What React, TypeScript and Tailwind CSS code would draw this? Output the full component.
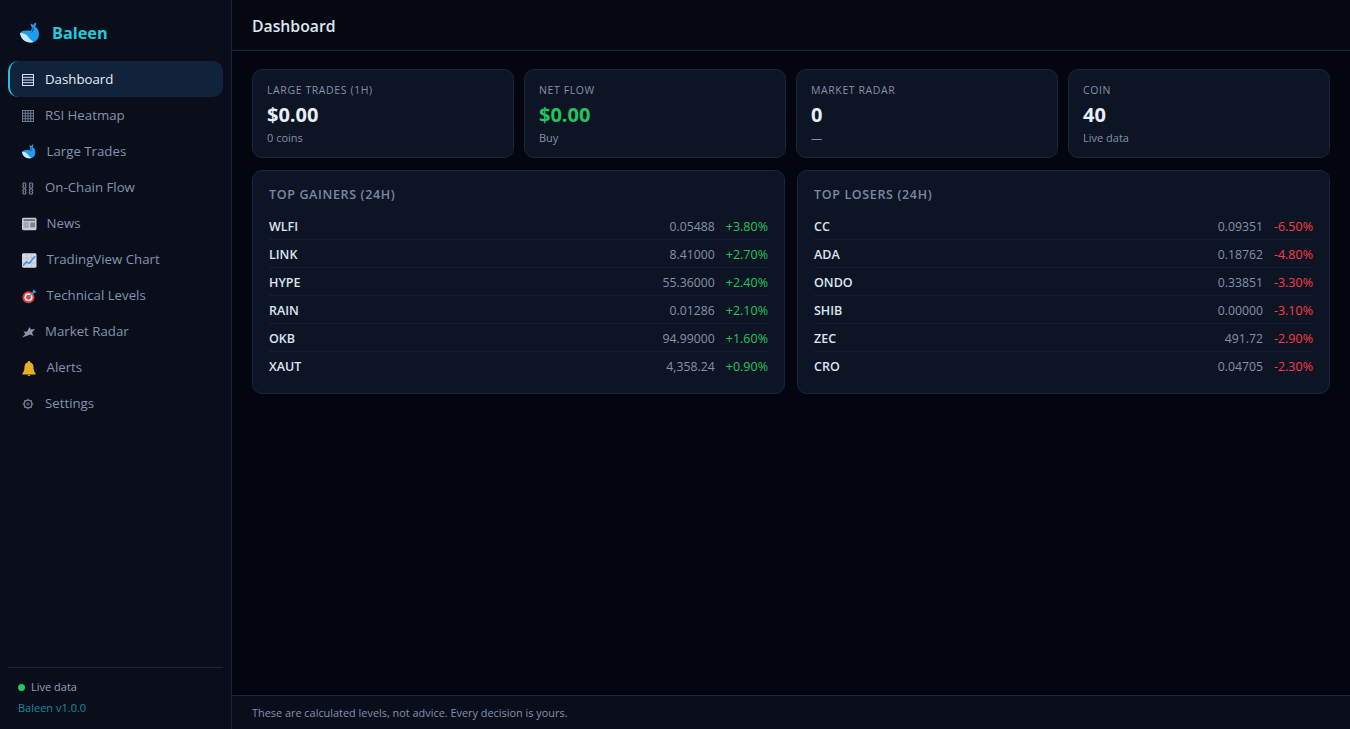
import React from "react";

const Whale = ({ s = 20 }: { s?: number }) => (
  <svg width={s} height={s * 1.1} viewBox="0 0 20 22">
    <path d="M0 11C2 8.500 7 8 10.500 9c1-1 1.500-2.500 1.300-4-.8-1-1.300-2-.8-3.500 1 .5 1.800 1 2.200 1.700.6-1.200 1.600-2.400 2.800-2.700.5 1.500 0 3-1 4.300 2.500 1.200 4 3.700 4 7.200 0 5-3.500 8.500-8.500 8.500C4.500 20.500.5 16 0 11z" fill="#1f9cf0" />
    <path d="M0 11c3.500 0 6 1 7.500 3s3 4 6 6c-1 .4-2 .5-3 .5C4.500 20.500.5 16 0 11z" fill="#c4e9fc" />
    <path d="M13 5.500c.5 1.800 0 3.500-1.200 4.800" fill="none" stroke="#0a3a60" strokeWidth="1" />
  </svg>
);

const LinesIcon = ({ grid = false, color }: { grid?: boolean; color: string }) => (
  <svg width="12" height="12" viewBox="0 0 12 12" fill="none" stroke={color} strokeWidth="1">
    <rect x="0.500" y="0.500" width="11" height="11" />
    <path d="M0 3.300h12M0 6h12M0 8.700h12" />
    {grid && <path d="M3.300 0v12M6 0v12M8.700 0v12" />}
  </svg>
);

const ChainIcon = () => (
  <svg width="12" height="13" viewBox="0 0 12 13" fill="none" stroke="#7b869d" strokeWidth="1.100">
    <path d="M1.500 1h1.800l.7 1-.7 1.500.7 1.500-.7 1H1.500l-.7-1 .7-1.500L.8 2zM8 1h2l.8 1-.8 1.500.8 1.500-.8 1H8l-.7-1L8 3.500 7.300 2z" />
    <path d="M1.500 7h1.800l.7 1-.7 1.500.7 1.500-.7 1H1.500l-.7-1 .7-1.500L.8 8zM8 7h2l.8 1-.8 1.500.8 1.500-.8 1H8l-.7-1L8 9.500 7.300 8z" />
  </svg>
);

const NewsIcon = () => (
  <svg width="15" height="14" viewBox="0 0 15 14">
    <rect x="0" y="0.500" width="15" height="13" rx="1.500" fill="#c9ccd4" />
    <rect x="1.500" y="2" width="12" height="2" fill="#6d7280" />
    <rect x="1.500" y="5.500" width="5.500" height="1" fill="#7d828e" />
    <rect x="1.500" y="7.500" width="5.500" height="1" fill="#7d828e" />
    <rect x="1.500" y="9.500" width="5.500" height="1" fill="#7d828e" />
    <rect x="8.500" y="5.500" width="5" height="5" fill="#7d828e" />
  </svg>
);

const ChartIcon = () => (
  <svg width="15" height="15" viewBox="0 0 15 15">
    <rect width="15" height="15" rx="1.500" fill="#d7d9e2" />
    <path d="M0 5h15M0 10h15M5 0v15M10 0v15" stroke="#b4b7c8" strokeWidth="0.600" />
    <path d="M1 13l3.500-4 3 1.500L13.500 3" fill="none" stroke="#3d8fe0" strokeWidth="1.500" />
  </svg>
);

const TargetIcon = () => (
  <svg width="15" height="15" viewBox="0 0 15 15">
    <circle cx="6.700" cy="8.300" r="6.200" fill="#e23c3c" />
    <circle cx="6.700" cy="8.300" r="4.200" fill="#f2e9e6" />
    <circle cx="6.700" cy="8.300" r="2.500" fill="#e23c3c" />
    <path d="M7 8l6-6" stroke="#3a9be8" strokeWidth="1.500" />
    <path d="M11 1.500l1.500-1.500.6 1.900 1.900.6-1.500 1.500-2-.5z" fill="#3a9be8" />
  </svg>
);

const SatIcon = () => (
  <svg width="13" height="12" viewBox="0 0 13 12">
    <path d="M0 11.500l3.300-3.500L1.500 5.500l3.500.3L7.500 1 9 3.500 13 3 10 6.500l1.500 3.500-3.500-1.500L4.500 10z" fill="#8a95a9" />
  </svg>
);

const Bell = () => (
  <svg width="14" height="15" viewBox="0 0 14 15">
    <path d="M7 0c.8 0 1.200.5 1.200 1.200C10.300 1.800 11.500 3.600 11.500 6c0 3 .7 5 2.200 6.500v.9H.3v-.9C1.800 11 2.500 9 2.500 6c0-2.400 1.200-4.200 3.300-4.800C5.800.5 6.200 0 7 0z" fill="#e8ae25" />
    <path d="M5.500 13.800h3C8.300 14.600 7.700 15 7 15s-1.300-.4-1.500-1.200z" fill="#e8ae25" />
  </svg>
);

const Gear = () => (
  <svg width="12" height="12" viewBox="0 0 12 12" fill="none" stroke="#7b869d">
    <circle cx="6" cy="6" r="3.900" strokeWidth="1.400" />
    <circle cx="6" cy="6" r="1.200" strokeWidth="0.800" />
    <path d="M6 .6v1M6 10.400v1M.6 6h1M10.400 6h1M2.200 2.200l.7.7M9.100 9.100l.7.7M2.200 9.800l.7-.7M9.100 2.900l.7-.7" strokeWidth="1" />
  </svg>
);

const nav = [
  { label: "Dashboard", icon: <LinesIcon color="#dce3ee" />, w: "w-[13px]", active: true },
  { label: "RSI Heatmap", icon: <LinesIcon grid color="#6f7a90" />, w: "w-[13px]" },
  { label: "Large Trades", icon: <Whale s={14} />, w: "w-[14.500px]" },
  { label: "On-Chain Flow", icon: <ChainIcon />, w: "w-[13px]" },
  { label: "News", icon: <NewsIcon />, w: "w-[14.500px]" },
  { label: "TradingView Chart", icon: <ChartIcon />, w: "w-[14.500px]" },
  { label: "Technical Levels", icon: <TargetIcon />, w: "w-[14.500px]" },
  { label: "Market Radar", icon: <SatIcon />, w: "w-[13px]" },
  { label: "Alerts", icon: <Bell />, w: "w-[14.500px]" },
  { label: "Settings", icon: <Gear />, w: "w-[13px]" },
];

const stats = [
  { label: "LARGE TRADES (1H)", value: "$0.00", sub: "0 coins", green: false },
  { label: "NET FLOW", value: "$0.00", sub: "Buy", green: true },
  { label: "MARKET RADAR", value: "0", sub: "—", green: false },
  { label: "COIN", value: "40", sub: "Live data", green: false },
];

const gainers = [
  ["WLFI", "0.05488", "+3.80%"],
  ["LINK", "8.41000", "+2.70%"],
  ["HYPE", "55.36000", "+2.40%"],
  ["RAIN", "0.01286", "+2.10%"],
  ["OKB", "94.99000", "+1.60%"],
  ["XAUT", "4,358.24", "+0.90%"],
];

const losers = [
  ["CC", "0.09351", "-6.50%"],
  ["ADA", "0.18762", "-4.80%"],
  ["ONDO", "0.33851", "-3.30%"],
  ["SHIB", "0.00000", "-3.10%"],
  ["ZEC", "491.72", "-2.90%"],
  ["CRO", "0.04705", "-2.30%"],
];

const Panel = ({ title, rows, up }: { title: string; rows: string[][]; up: boolean }) => (
  <div className="flex-1 h-[224px] rounded-[10px] border border-[#1a2540] bg-[#0d1423] px-4 pt-[15px]">
    <div className="mb-[8px] text-[12.500px] leading-[18px] font-semibold tracking-[0.64px] text-[#7a89a6]">{title}</div>
    {rows.map((r, i) => (
      <div key={r[0]} className={`flex h-[28px] items-center border-b pt-[4px] ${i < rows.length - 1 ? "border-[#141d31]" : "border-transparent"}`}>
        <span className="text-[12.500px] font-semibold text-[#dbe5f3]">{r[0]}</span>
        <span className="ml-auto text-[12.250px] text-[#8492ac]">{r[1]}</span>
        <span className={`ml-[11px] text-[12.500px] ${up ? "text-[#22c55e]" : "text-[#ff3b47]"}`}>{r[2]}</span>
      </div>
    ))}
  </div>
);

export default function App() {
  return (
    <div className="flex h-[729px] w-[1350px] overflow-hidden bg-[#04060f] font-['Open_Sans','Noto_Sans',sans-serif]">
      <aside className="flex w-[232px] shrink-0 flex-col border-r border-[#1a2540] bg-[#0a0e1a] px-2">
        <div className="flex h-[61px] items-center pt-[5px] pl-[12px]">
          <Whale s={20} />
          <span className="ml-[12px] text-[16.250px] font-bold text-[#22c9dc]">Baleen</span>
        </div>
        <nav className="flex flex-col">
          {nav.map((n) => (
            <div
              key={n.label}
              className={`flex h-[36px] items-center pl-[12px] pt-[2px] text-[13.250px] ${
                n.active
                  ? "rounded-[10px] border-l-2 border-[#22c4d8] bg-[#10233a] text-[#e6edf6]"
                  : "border-l-2 border-transparent text-[#8593ae]"
              }`}
            >
              <span className={`flex shrink-0 items-center ${n.w}`}>{n.icon}</span>
              <span className="ml-[10px]">{n.label}</span>
            </div>
          ))}
        </nav>
        <div className="mt-auto h-[62px] border-t border-[#1a2540] pl-[10px] pt-[11px]">
          <div className="flex items-center text-[11px] leading-[16px] text-[#94a0b6]">
            <span className="mr-[6px] h-[7px] w-[7px] rounded-full bg-[#22c55e]" />
            Live data
          </div>
          <div className="mt-[5px] text-[11px] leading-[16px] text-[#138a9a]">Baleen v1.0.0</div>
        </div>
      </aside>
      <main className="flex min-w-0 flex-1 flex-col">
        <header className="flex h-[51px] shrink-0 items-center border-b border-[#1a2540] bg-[#050811] pl-5 pt-[3px]">
          <h1 className="text-[15.750px] font-semibold text-[#dfe7f2]">Dashboard</h1>
        </header>
        <div className="flex-1 px-5 pt-[18px]">
          <div className="grid grid-cols-4 gap-[10px]">
            {stats.map((s) => (
              <div key={s.label} className="h-[89px] rounded-[10px] border border-[#1a2540] bg-[#0d1423] px-[14px] pt-[13px]">
                <div className="text-[10.500px] leading-[15px] tracking-[0.6px] text-[#8492ac]">{s.label}</div>
                <div className={`mt-[3px] text-[20px] leading-[27px] font-bold ${s.green ? "text-[#22c55e]" : "text-[#e6eef8]"}`}>{s.value}</div>
                <div className="mt-[2px] text-[11px] leading-[16px] text-[#8492ac]">{s.sub}</div>
              </div>
            ))}
          </div>
          <div className="mt-3 flex gap-3">
            <Panel title="TOP GAINERS (24H)" rows={gainers} up />
            <Panel title="TOP LOSERS (24H)" rows={losers} up={false} />
          </div>
        </div>
        <footer className="flex h-[34px] shrink-0 items-center border-t border-[#1a2540] bg-[#0a0e1a] pl-5 pt-[1px] text-[10.900px] text-[#8492ac]">
          These are calculated levels, not advice. Every decision is yours.
        </footer>
      </main>
    </div>
  );
}
